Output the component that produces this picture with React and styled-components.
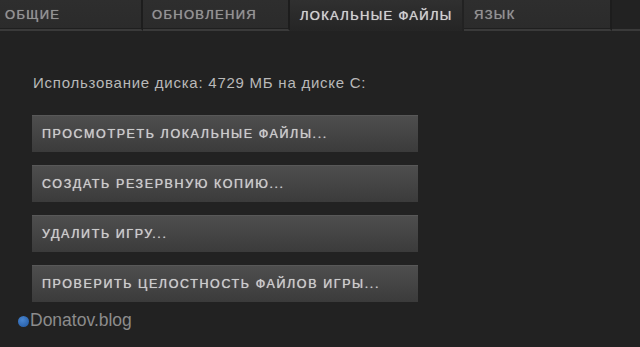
import React from "react";
import styled, { createGlobalStyle } from "styled-components";

const Global = createGlobalStyle`
  html, body { margin: 0; padding: 0; background: #222222; }
  body { font-family: "Liberation Sans", Arial, sans-serif; }
`;

const Page = styled.div`
  width: 640px;
  height: 347px;
  background: #222222;
  overflow: hidden;
  display: flex;
  flex-direction: column;
`;

const TabBar = styled.div`
  display: flex;
  height: 31px;
  flex-shrink: 0;
`;

const Tab = styled.div`
  width: ${(p) => p.$w}px;
  box-sizing: border-box;
  display: flex;
  align-items: center;
  padding-left: ${(p) => p.$pl}px;
  font-size: 13px;
  letter-spacing: 1.3px;
  text-transform: uppercase;
  text-shadow: 0 0 0.7px currentColor;
  color: ${(p) => (p.$active ? "#d0d0d0" : "#939393")};
  background: ${(p) =>
    p.$active
      ? "linear-gradient(#303030, #252525)"
      : "linear-gradient(#2e2e2e, #2b2b2b)"};
  border-right: 2px solid ${(p) => (p.$active ? "#222222" : "#1d1d1d")};
  border-bottom: ${(p) => (p.$active ? "none" : "2px solid #3a3a3a")};
  box-shadow: ${(p) => (p.$active ? "none" : "inset 0 -1px 0 #1f1f1f")};
`;

const TabFill = styled.div`
  flex: 1;
  border-bottom: 2px solid #3a3a3a;
  background: #222222;
`;

const Content = styled.div`
  display: flex;
  flex-direction: column;
  padding: 43px 0 0 33px;
`;

const DiskInfo = styled.div`
  font-size: 15px;
  letter-spacing: 0.75px;
  color: #b9b9b9;
  height: 17px;
  line-height: 17px;
  margin-bottom: 24px;
`;

const Buttons = styled.div`
  display: flex;
  flex-direction: column;
  gap: 13px;
  margin-left: -1px;
`;

const Button = styled.div`
  width: 386px;
  height: 37px;
  box-sizing: border-box;
  display: flex;
  align-items: center;
  padding-left: 10px;
  background: linear-gradient(#4e4e4e, #3b3b3b);
  border-top: 1px solid #585858;
  font-size: 12.5px;
  letter-spacing: 1.6px;
  text-shadow: 0 0 0.7px currentColor;
  color: #cbcbcb;
`;

const Watermark = styled.div`
  display: flex;
  align-items: center;
  gap: 1px;
  margin: 8px 0 0 -15px;
  font-size: 17.5px;
  color: #8c8c8c;
`;

const Dot = styled.span`
  width: 11px;
  height: 11px;
  border-radius: 50%;
  background: radial-gradient(circle at 40% 35%, #4a86d0, #1e56a0);
  margin-top: 2px;
`;

const tabs = [
  { label: "Общие", w: 143, pl: 5 },
  { label: "Обновления", w: 147, pl: 9 },
  { label: "Локальные файлы", w: 174, pl: 10, active: true },
  { label: "Язык", w: 148, pl: 10 },
];

const buttons = [
  "ПРОСМОТРЕТЬ ЛОКАЛЬНЫЕ ФАЙЛЫ...",
  "СОЗДАТЬ РЕЗЕРВНУЮ КОПИЮ...",
  "УДАЛИТЬ ИГРУ...",
  "ПРОВЕРИТЬ ЦЕЛОСТНОСТЬ ФАЙЛОВ ИГРЫ...",
];

export default function App() {
  return (
    <>
      <Global />
      <Page>
        <TabBar>
          {tabs.map((t) => (
            <Tab key={t.label} $w={t.w} $pl={t.pl} $active={t.active}>
              {t.label}
            </Tab>
          ))}
          <TabFill />
        </TabBar>
        <Content>
          <DiskInfo>Использование диска: 4729 МБ на диске C:</DiskInfo>
          <Buttons>
            {buttons.map((b) => (
              <Button key={b}>{b}</Button>
            ))}
          </Buttons>
          <Watermark>
            <Dot />
            Donatov.blog
          </Watermark>
        </Content>
      </Page>
    </>
  );
}
